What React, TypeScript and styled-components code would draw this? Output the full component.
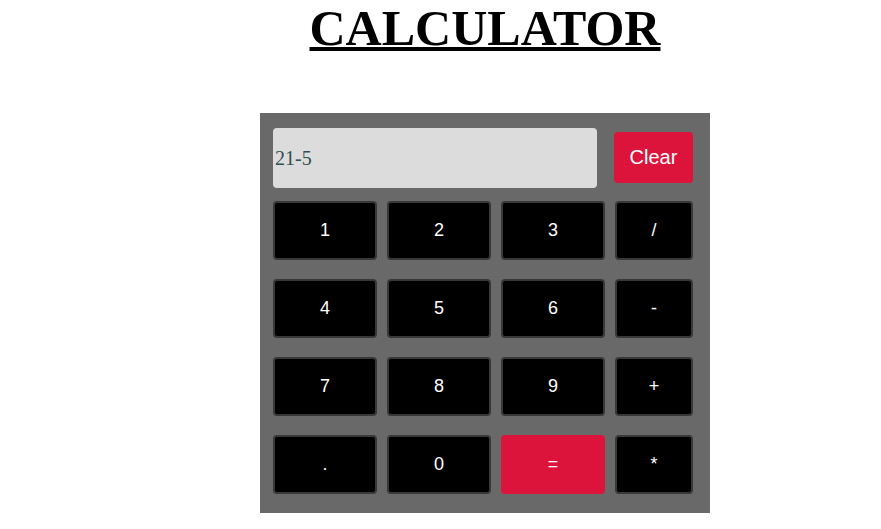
import React from "react";
import styled, { createGlobalStyle } from "styled-components";

const Global = createGlobalStyle`
  html, body { margin: 0; padding: 0; background: #ffffff; }
  body { font-family: "Liberation Serif", "Times New Roman", serif; }
`;

const Page = styled.div`
  display: flex;
  flex-direction: column;
  align-items: center;
  padding-left: 89px;
  width: 881px;
  box-sizing: border-box;
`;

const Title = styled.h1`
  margin: 0;
  font-family: "Liberation Serif", "Times New Roman", serif;
  font-weight: bold;
  font-size: 50px;
  line-height: 56px;
  text-decoration: underline;
  text-decoration-thickness: 4px;
  text-underline-offset: 2px;
  color: #000;
`;

const Panel = styled.div`
  margin-top: 57px;
  width: 450px;
  height: 400px;
  box-sizing: border-box;
  background: #696969;
  padding: 15px 17px 20px 13px;
  display: flex;
  flex-direction: column;
  gap: 13px;
`;

const TopRow = styled.div`
  display: flex;
  align-items: flex-start;
  justify-content: space-between;
`;

const Display = styled.div`
  width: 324px;
  height: 60px;
  box-sizing: border-box;
  background: #dcdcdc;
  border-radius: 4px;
  display: flex;
  align-items: center;
  padding-left: 2px;
  font-family: "Liberation Serif", "Times New Roman", serif;
  font-size: 20px;
  color: #2f4f4f;
`;

const ClearButton = styled.button`
  margin-top: 4px;
  width: 79px;
  height: 51px;
  border: none;
  border-radius: 4px;
  background: #dc143c;
  color: #fff;
  font-family: "Liberation Sans", Arial, sans-serif;
  font-size: 20px;
  padding: 0;
`;

const Keys = styled.div`
  display: grid;
  grid-template-columns: 104px 104px 104px 78px;
  grid-auto-rows: 59px;
  column-gap: 10px;
  row-gap: 19px;
`;

const Key = styled.button<{ $accent?: boolean }>`
  width: 100%;
  height: 100%;
  box-sizing: border-box;
  padding: 0;
  border-radius: 4px;
  border: ${(p) => (p.$accent ? "none" : "2px solid #383838")};
  background: ${(p) => (p.$accent ? "#dc143c" : "#000")};
  color: #fff;
  font-family: "Liberation Sans", Arial, sans-serif;
  font-size: 18px;
`;

const keys = ["1", "2", "3", "/", "4", "5", "6", "-", "7", "8", "9", "+", ".", "0", "=", "*"];

export default function App() {
  return (
    <>
      <Global />
      <Page>
        <Title>CALCULATOR</Title>
        <Panel>
          <TopRow>
            <Display>21-5</Display>
            <ClearButton>Clear</ClearButton>
          </TopRow>
          <Keys>
            {keys.map((k) => (
              <Key key={k} $accent={k === "="}>
                {k}
              </Key>
            ))}
          </Keys>
        </Panel>
      </Page>
    </>
  );
}
